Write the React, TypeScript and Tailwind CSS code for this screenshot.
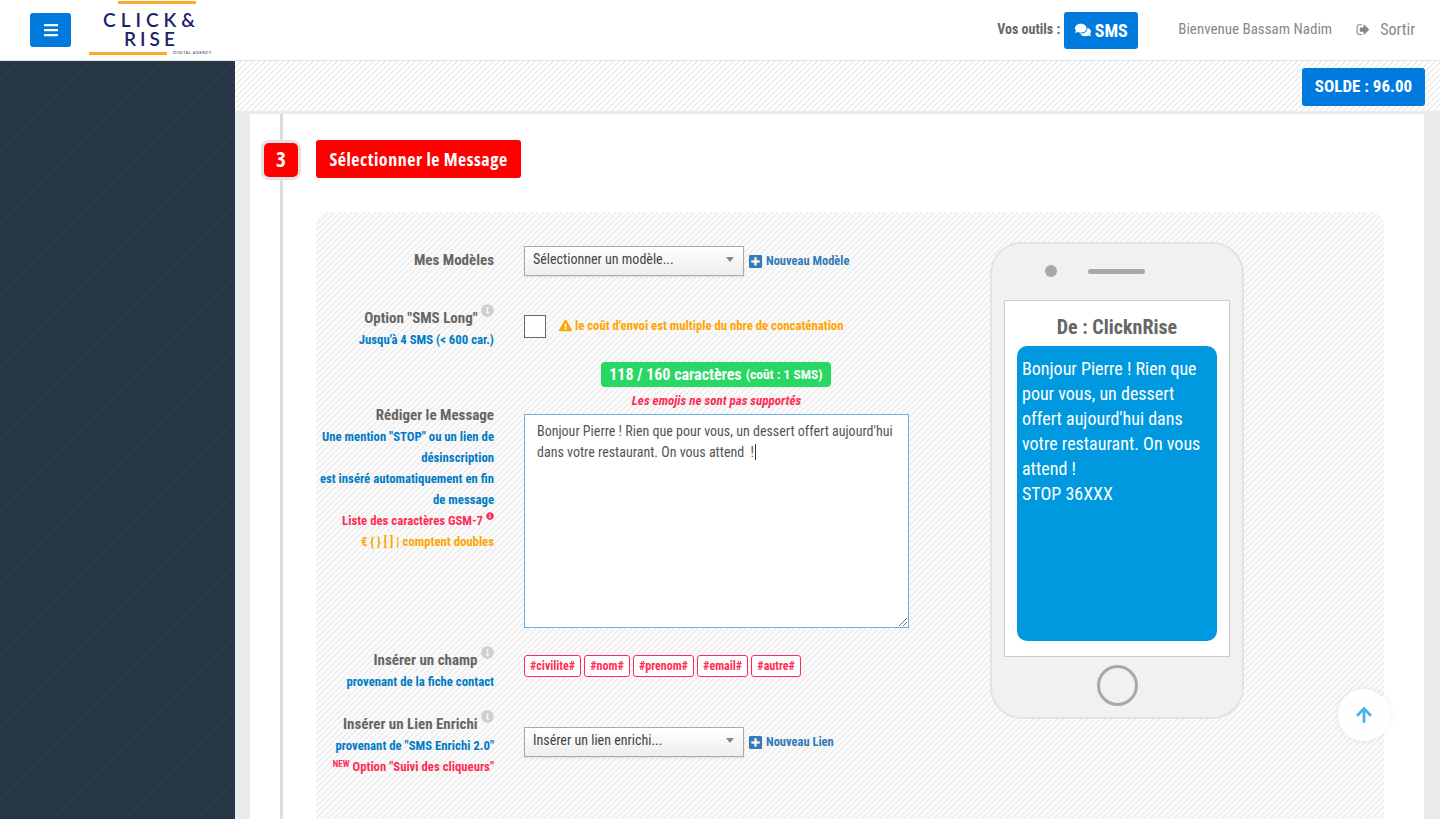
import React from "react";
import { FaBars, FaComments, FaPlusSquare, FaExclamationTriangle, FaInfoCircle, FaArrowUp } from "react-icons/fa";

function SignOut() {
  return (
    <svg viewBox="0 0 1536 1792" width="14" height="15" fill="currentColor" className="inline-block">
      <path d="M640 1440q0 13 0 36t-1 36-9 23-23 9H288q-119 0-203.500-84.500T0 1256V552q0-119 84.500-203.500T288 264h320q13 0 22.500 9.500T640 296q0 13 .5 36t-.5 36-9 23-23 9H288q-66 0-113 47t-47 113v704q0 66 47 113t113 47h320q13 0 22.500 9.500T640 1440zM1496 904q0 26-19 45l-544 544q-19 19-45 19t-45-19-19-45v-288H448q-26 0-45-19t-19-45V712q0-26 19-45t45-19h376V360q0-26 19-45t45-19 45 19l544 544q19 19 19 45z" />
    </svg>
  );
}

function Info({ red }: { red?: boolean }) {
  return <FaInfoCircle className={`inline-block align-super ${red ? "text-[8px] text-[#ff2d55]" : "text-[13px] text-[#cfcfcf]"}`} />;
}

function Select({ label }: { label: string }) {
  return (
    <div className="flex h-[30px] w-[220px] items-center justify-between border border-[#aaaaaa] bg-gradient-to-b from-white to-[#eeeeee] pl-2 pr-[9px] text-[14px] text-[#444444] shadow-[0_1px_2px_rgba(0,0,0,0.1)]">
      <span className="pb-[3px]">{label}</span>
      <span className="mb-1 h-0 w-0 border-x-[4px] border-t-[5px] border-x-transparent border-t-[#888888]" />
    </div>
  );
}

function NewLink({ label }: { label: string }) {
  return (
    <span className="ml-[4px] inline-flex items-center gap-[3px] text-[12.5px] font-bold text-[#337ab7]">
      <FaPlusSquare className="text-[15px]" />
      {label}
    </span>
  );
}

function Tag({ label }: { label: string }) {
  return (
    <span className="flex h-[22px] items-center rounded-[3px] border border-[#ff2d55] bg-white px-[5px] text-[12px] font-bold leading-[15px] text-[#ff2d55]">
      {label}
    </span>
  );
}

export default function App() {
  return (
    <div className="flex h-[819px] w-[1440px] flex-col overflow-hidden bg-white font-['Roboto_Condensed',Roboto,sans-serif] text-[#666666]">
      <header className="flex h-[61px] shrink-0 items-center border-b border-[#e5e5e5] bg-white">
        <button className="mb-[1px] ml-[30px] flex h-[34px] w-[41px] items-center justify-center rounded-[3px] bg-[#007bdd] text-[16px] text-white">
          <FaBars />
        </button>
        <div className="relative ml-[18px] h-[60px] w-[122px] font-['Lato',sans-serif] text-[#1b1f6b]">
          <div className="absolute left-[29px] top-[1px] h-[3px] w-[78px] bg-[#fbab2b]" />
          <div className="absolute left-[14px] top-[11px] whitespace-nowrap text-[19px] font-semibold leading-[17px] tracking-[5px]">CLICK&amp;</div>
          <div className="absolute left-[35px] top-[30px] whitespace-nowrap text-[19px] font-semibold leading-[17px] tracking-[4px]">RISE</div>
          <div className="absolute left-0 top-[52px] h-[3px] w-[78px] bg-[#fbab2b]" />
          <div className="absolute left-[84px] top-[50px] whitespace-nowrap text-[4px] leading-[6px] tracking-[0.5px]">DIGITAL AGENCY</div>
        </div>
        <div className="ml-auto flex items-center">
          <span className="mb-[2px] mr-[4px] text-[14px] font-bold">Vos outils :</span>
          <span className="flex h-[37px] w-[74px] items-center justify-center gap-[4px] rounded-[3px] bg-[#007bdd] text-[18px] font-bold text-white">
            <FaComments className="text-[16px]" /> SMS
          </span>
          <span className="ml-[40px] mb-[1px] text-[15px] text-[#888888]">Bienvenue Bassam Nadim</span>
          <span className="ml-[24px] mb-[1px] mr-[25px] flex items-center gap-[10px] text-[16px] text-[#888888]">
            <SignOut /> Sortir
          </span>
        </div>
      </header>
      <div className="flex min-h-0 flex-1">
        <aside className="w-[235px] shrink-0 bg-[linear-gradient(135deg,#2d3d4c_10%,#263646_10%,#263646_50%,#2d3d4c_50%,#2d3d4c_60%,#263646_60%)] bg-[length:9px_9px]" />
        <main className="flex min-w-0 flex-1 flex-col bg-[#e9ebec]">
          <div className="flex h-[50px] shrink-0 items-start justify-end bg-[linear-gradient(135deg,#ececec_12.5%,#ffffff_12.5%,#ffffff_50%,#ececec_50%,#ececec_62.5%,#ffffff_62.5%)] bg-[length:6px_6px] pr-[15px] pt-[7px]">
            <span className="flex h-[38px] w-[123px] items-center justify-center rounded-[3px] bg-[#007bdd] text-[17px] font-bold text-white">
              SOLDE : 96.00
            </span>
          </div>
          <div className="ml-[15px] mr-[16px] mt-[3px] flex-1 bg-white pl-[30px]">
            <div className="h-full border-l-[3px] border-[#dddddd] pl-[33px] pr-[40px]">
              <div className="relative flex h-[98px] items-start pt-[26px]">
                <span className="absolute left-[-55px] top-[26px] flex h-[40px] w-[40px] items-center justify-center rounded-[8px] border-[3px] border-[#e3e3e3] bg-[#ff0000] font-['Open_Sans',sans-serif] text-[21px] font-bold text-white [font-stretch:75%]">
                  3
                </span>
                <span className="flex h-[38px] w-[205px] items-center justify-center rounded-[3px] bg-[#ff0000] font-['Open_Sans',sans-serif] text-[18px] font-bold tracking-[0.5px] text-white [font-stretch:75%]">
                  Sélectionner le Message
                </span>
              </div>
              <section className="flex h-[700px] rounded-t-[14px] bg-[linear-gradient(135deg,#ededed_12.5%,#fbfbfb_12.5%,#fbfbfb_50%,#ededed_50%,#ededed_62.5%,#fbfbfb_62.5%)] bg-[length:6px_6px] pt-[30px]">
                <div className="w-[674px] shrink-0">
                  <div className="flex h-[57px] items-start pt-[4px]">
                    <div className="w-[178px] pt-[3px] text-right text-[15px] font-bold">Mes Modèles</div>
                    <div className="ml-[30px] flex items-center">
                      <Select label="Sélectionner un modèle..." />
                      <NewLink label="Nouveau Modèle" />
                    </div>
                  </div>
                  <div className="flex h-[63px] items-start pt-[5px]">
                    <div className="w-[178px] text-right">
                      <div className="text-[15px] font-bold leading-[22px]">Option "SMS Long" <Info /></div>
                      <div className="text-[12.75px] font-bold leading-[21px] text-[#007bc4]">Jusqu'à 4 SMS (&lt; 600 car.)</div>
                    </div>
                    <div className="ml-[30px] mt-[11px] flex items-center">
                      <span className="h-[23px] w-[22px] border border-[#666666] bg-white" />
                      <span className="mb-[2px] ml-[13px] flex items-center gap-[3px] text-[12.75px] font-bold text-[#ffa500]">
                        <FaExclamationTriangle className="text-[13px]" /> le coût d'envoi est multiple du nbre de concaténation
                      </span>
                    </div>
                  </div>
                  <div className="flex">
                    <div className="w-[178px] pt-[42px] text-right">
                      <div className="text-[15px] font-bold leading-[22px]">Rédiger le Message</div>
                      <div className="text-[12.75px] font-bold leading-[21px] text-[#007bc4]">
                        Une mention "STOP" ou un lien de désinscription<br />est inséré automatiquement en fin de message
                      </div>
                      <div className="text-[12.75px] font-bold leading-[21px] text-[#ff2d55]">Liste des caractères GSM-7 <Info red /></div>
                      <div className="text-[12.75px] font-bold leading-[21px] text-[#ffa500]">€ {"{ }"} [ ] | comptent doubles</div>
                    </div>
                    <div className="ml-[30px] w-[385px]">
                      <div className="ml-[-1px] flex justify-center">
                        <span className="flex h-[25px] w-[230px] items-center justify-center gap-[4px] rounded-[4px] bg-[#28d764] text-[16px] font-bold text-white">
                          118 / 160 caractères <span className="text-[13.5px]">(coût : 1 SMS)</span>
                        </span>
                      </div>
                      <div className="mt-[5px] text-center text-[13px] font-bold italic leading-[18px] text-[#ff2d55]">Les emojis ne sont pas supportés</div>
                      <div className="relative mt-[4px] h-[214px] border border-[#66afe9] bg-white px-[12px] py-[6px] text-[14px] leading-[21px] text-[#555555]">
                        Bonjour Pierre ! Rien que pour vous, un dessert offert aujourd'hui dans votre restaurant. On vous attend&nbsp; !<span className="ml-[1px] inline-block h-[16px] w-px bg-[#333333] align-text-bottom" />
                        <svg viewBox="0 0 8 8" className="absolute bottom-[1px] right-[1px] h-[8px] w-[8px] text-[#777777]" stroke="currentColor">
                          <path d="M0 8 8 0M4 8 8 4" />
                        </svg>
                      </div>
                    </div>
                  </div>
                  <div className="mt-[18px] flex h-[58px] items-start">
                    <div className="w-[178px] text-right">
                      <div className="text-[15px] font-bold leading-[22px]">Insérer un champ <Info /></div>
                      <div className="text-[12.75px] font-bold leading-[21px] text-[#007bc4]">provenant de la fiche contact</div>
                    </div>
                    <div className="ml-[30px] mt-[9px] flex gap-[3.2px]">
                      <Tag label="#civilite#" />
                      <Tag label="#nom#" />
                      <Tag label="#prenom#" />
                      <Tag label="#email#" />
                      <Tag label="#autre#" />
                    </div>
                  </div>
                  <div className="mt-[6px] flex items-start">
                    <div className="w-[178px] text-right">
                      <div className="text-[15px] font-bold leading-[22px]">Insérer un Lien Enrichi <Info /></div>
                      <div className="text-[12.75px] font-bold leading-[21px] text-[#007bc4]">provenant de "SMS Enrichi 2.0"</div>
                      <div className="text-[12.75px] font-bold leading-[21px] text-[#ff2d55]"><sup className="text-[9px]">NEW</sup> Option "Suivi des cliqueurs"</div>
                    </div>
                    <div className="ml-[30px] mt-[17px] flex items-center">
                      <Select label="Insérer un lien enrichi..." />
                      <NewLink label="Nouveau Lien" />
                    </div>
                  </div>
                </div>
                <div className="h-[477px] w-[254px] rounded-[32px] border-2 border-[#e3e3e3] bg-[#f1f1f1] px-[12px] pt-[24px]">
                  <div className="flex h-[6px] items-center">
                    <span className="ml-[41px] h-[12px] w-[12px] rounded-full bg-[#a7a8ab]" />
                    <span className="ml-[31px] h-[5px] w-[57px] rounded-full bg-[#a7a8ab]" />
                  </div>
                  <div className="mt-[26px] h-[357px] border border-[#cccccc] bg-white px-[12px]">
                    <div className="pb-[5px] pt-[12px] text-center text-[20px] font-bold leading-[28px]">De : ClicknRise</div>
                    <div className="h-[295px] rounded-[10px] bg-[#0099df] px-[5px] py-[10px] text-[18px] leading-[25px] text-white">
                      Bonjour Pierre ! Rien que pour vous, un dessert offert aujourd'hui dans votre restaurant. On vous attend !<br />STOP 36XXX
                    </div>
                  </div>
                  <div className="mx-auto mt-[8px] h-[41px] w-[41px] rounded-full border-[3px] border-[#a7a8ab]" />
                </div>
              </section>
            </div>
          </div>
        </main>
      </div>
      <button className="fixed left-[1338px] top-[689px] flex h-[52px] w-[52px] items-center justify-center rounded-full bg-white/90 text-[18px] text-[#44b4f0] shadow-[0_0_6px_rgba(0,0,0,0.08)]">
        <FaArrowUp />
      </button>
    </div>
  );
}
